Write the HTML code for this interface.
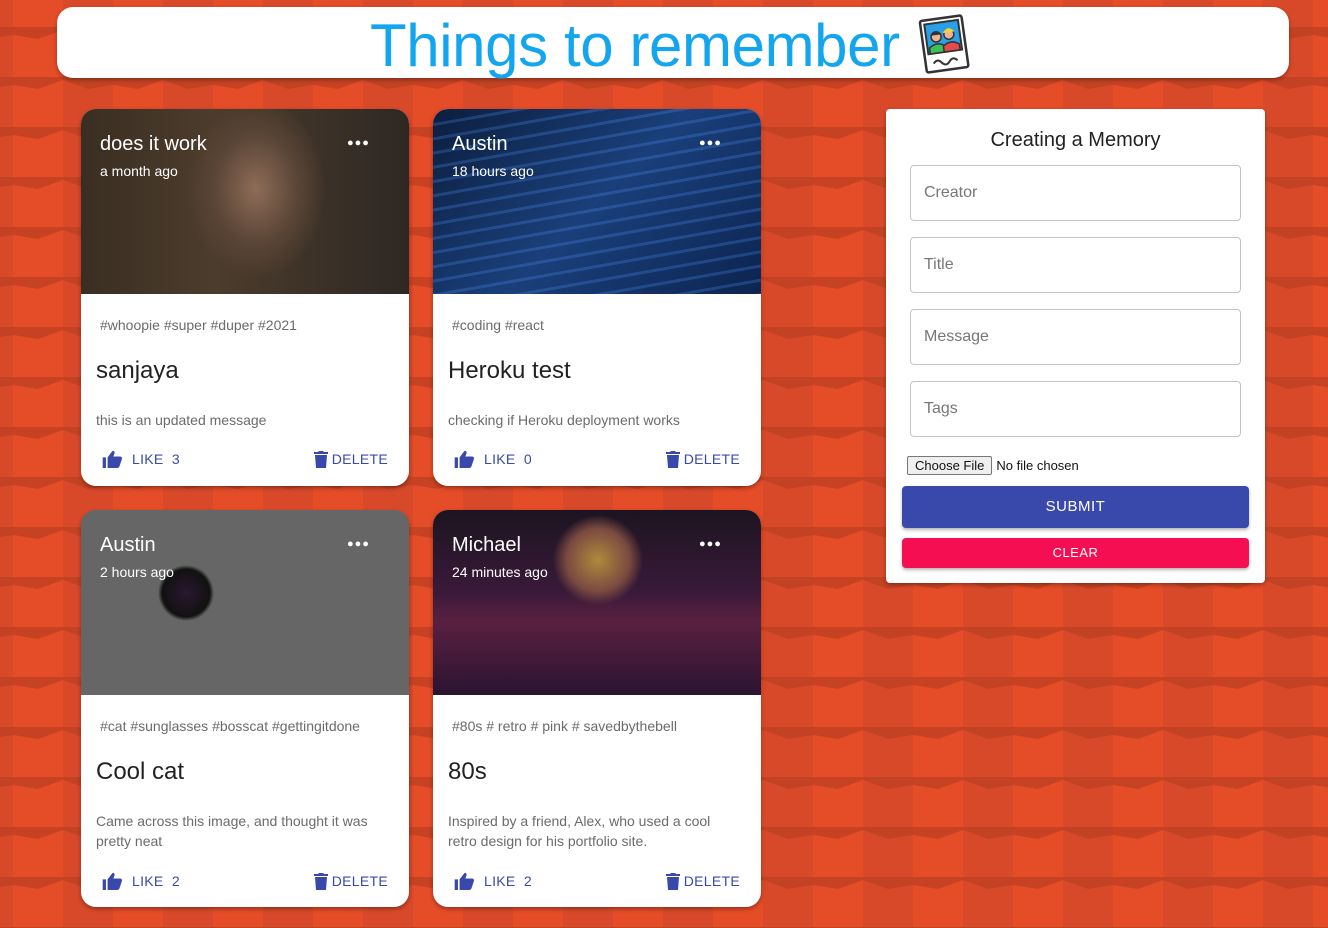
<!DOCTYPE html>
<html><head><meta charset="utf-8"><style>
*{box-sizing:border-box;margin:0;padding:0}
body{width:1328px;height:928px;overflow:hidden;position:relative;font-family:"Liberation Sans",Arial,sans-serif;background:#e64d29}
#bg{position:absolute;left:0;top:0}
.header{position:absolute;left:57px;top:7px;width:1232px;height:71px;background:#fff;border-radius:16px;box-shadow:0 2px 4px rgba(0,0,0,.3)}
.header h1{position:absolute;left:313px;top:4px;font-weight:400;font-size:60px;color:#13a6ee;letter-spacing:-.4px;white-space:nowrap}
.card{position:absolute;width:328px;background:#fff;border-radius:15px;overflow:hidden;box-shadow:0 2px 4px rgba(0,0,0,.35)}
.img{position:absolute;left:0;top:0;width:328px;height:185px}
.name{position:absolute;left:19px;top:24px;color:#fff;font-size:20px}
.time{position:absolute;left:19px;top:54px;color:#fff;font-size:14px}
.dots{position:absolute;left:266px;top:28px;color:#fff;font-size:11px;letter-spacing:1px;font-weight:bold}
.tags{position:absolute;left:19px;top:208px;color:#6b6b6b;font-size:14px}
.title{position:absolute;left:15px;top:248px;color:#222;font-size:24px}
.msg{position:absolute;left:15px;color:#6b6b6b;font-size:14px;line-height:20px;width:285px}
.act{position:absolute;left:0;width:328px;height:24px;color:#3949ab;font-size:14px;letter-spacing:.3px}
.like{position:absolute;left:21px;top:0;display:flex;align-items:center;gap:9px}
.del{position:absolute;right:21px;top:0;display:flex;align-items:center;gap:4px}
.form{position:absolute;left:886px;top:109px;width:379px;height:474px;background:#fff;border-radius:4px;box-shadow:0 2px 4px rgba(0,0,0,.3)}
.form h2{position:absolute;left:0;width:379px;top:20px;text-align:center;font-weight:400;font-size:20px;color:#222}
.in{position:absolute;left:24px;width:331px;height:56px;border:1px solid #c4c4c4;border-radius:4px;padding:18px 13px;font-size:16px;color:#777}
.btn{position:absolute;left:16px;width:347px;color:#fff;text-align:center;border-radius:4px;box-shadow:0 2px 3px rgba(0,0,0,.3);letter-spacing:.5px}
</style></head><body>
<svg id="bg" width="1328" height="928">
<defs>
<pattern id="p" x="13" y="27" width="100" height="50" patternUnits="userSpaceOnUse">
<rect width="50" height="50" fill="#e54c28"/>
<rect x="50" width="50" height="50" fill="#d8492a"/>
<polygon points="0,0 50,0 50,3 25,12 0,8" fill="#9a3318" opacity=".4"/>
<polygon points="50,0 100,0 100,8 75,12 50,3" fill="#9a3318" opacity=".35"/>
</pattern>
</defs>
<rect width="1328" height="928" fill="url(#p)"/>
</svg>

<div class="header"><h1>Things to remember</h1>
<svg style="position:absolute;left:858px;top:5px" width="58" height="62" viewBox="0 0 58 62">
<g transform="rotate(-8 29 31)"><rect x="8" y="6" width="42" height="52" rx="2" fill="#fff" stroke="#333" stroke-width="2.5"/>
<rect x="12" y="10" width="34" height="30" fill="#2aa0e8" stroke="#333" stroke-width="2"/>
<circle cx="22" cy="24" r="5" fill="#f2b48c" stroke="#333" stroke-width="1.5"/><path d="M16 22 q6-8 12 0z" fill="#333"/>
<circle cx="35" cy="23" r="5" fill="#f2b48c" stroke="#333" stroke-width="1.5"/><path d="M29 21 q6-8 12 0z" fill="#f6d33c"/>
<path d="M14 40 v-6 q8-6 16 0 v6z" fill="#3cc05a" stroke="#333" stroke-width="1.5"/>
<path d="M28 40 v-6 q8-6 16 0 v6z" fill="#e84a4a" stroke="#333" stroke-width="1.5"/>
<path d="M16 50 q4-5 8 0 t8 0 t8 0" fill="none" stroke="#333" stroke-width="2"/></g></svg>
</div>

<!-- card 1 -->
<div class="card" style="left:81px;top:109px;height:377px">
<div class="img" style="background:radial-gradient(ellipse 70px 90px at 175px 80px,#8e6c58,#5a4536 60%,transparent 100%),linear-gradient(90deg,#3a2e22,#4c3c2c 40%,#2e2824)"></div>
<div class="name">does it work</div><div class="time">a month ago</div><div class="dots">●●●</div>
<div class="tags">#whoopie #super #duper #2021</div>
<div class="title">sanjaya</div>
<div class="msg" style="top:301px">this is an updated message</div>
<div class="act" style="top:341px"><span class="like"><svg width="21" height="18" viewBox="0 0 24 22"><path fill="#3949ab" d="M0 9h4v13H0zM6 9l6-8c2 0 3 1 2.5 3L13 8h8c2 0 3 1.5 2.5 3l-3 9c-.5 1.3-1.5 2-3 2H6z"/></svg>LIKE&nbsp;&nbsp;3</span><span class="del"><svg width="14" height="18" viewBox="0 0 14 18"><path fill="#3949ab" d="M1 5h12l-1 13H2zM0 2h4l1-1h4l1 1h4v2H0z"/></svg>DELETE</span></div>
</div>

<!-- card 2 -->
<div class="card" style="left:433px;top:109px;height:377px">
<div class="img" style="background:repeating-linear-gradient(170deg,rgba(80,150,255,.25) 0 3px,transparent 3px 14px),linear-gradient(135deg,#0c1e3e,#1a3f7a 50%,#0c2450)"></div>
<div class="name">Austin</div><div class="time">18 hours ago</div><div class="dots">●●●</div>
<div class="tags">#coding #react</div>
<div class="title">Heroku test</div>
<div class="msg" style="top:301px">checking if Heroku deployment works</div>
<div class="act" style="top:341px"><span class="like"><svg width="21" height="18" viewBox="0 0 24 22"><path fill="#3949ab" d="M0 9h4v13H0zM6 9l6-8c2 0 3 1 2.5 3L13 8h8c2 0 3 1.5 2.5 3l-3 9c-.5 1.3-1.5 2-3 2H6z"/></svg>LIKE&nbsp;&nbsp;0</span><span class="del"><svg width="14" height="18" viewBox="0 0 14 18"><path fill="#3949ab" d="M1 5h12l-1 13H2zM0 2h4l1-1h4l1 1h4v2H0z"/></svg>DELETE</span></div>
</div>

<!-- card 3 -->
<div class="card" style="left:81px;top:510px;height:397px">
<div class="img" style="background:radial-gradient(circle 28px at 105px 83px,#2a1830,#111 85%,#666 100%),radial-gradient(circle 28px at 230px 83px,#5a1c3c,#111 85%,#666 100%),radial-gradient(ellipse 130px 110px at 165px 110px,#6a6a6a,#3a3a3a 70%,#2a2a2a)"></div>
<div class="name">Austin</div><div class="time">2 hours ago</div><div class="dots">●●●</div>
<div class="tags">#cat #sunglasses #bosscat #gettingitdone</div>
<div class="title">Cool cat</div>
<div class="msg" style="top:301px">Came across this image, and thought it was pretty neat</div>
<div class="act" style="top:362px"><span class="like"><svg width="21" height="18" viewBox="0 0 24 22"><path fill="#3949ab" d="M0 9h4v13H0zM6 9l6-8c2 0 3 1 2.5 3L13 8h8c2 0 3 1.5 2.5 3l-3 9c-.5 1.3-1.5 2-3 2H6z"/></svg>LIKE&nbsp;&nbsp;2</span><span class="del"><svg width="14" height="18" viewBox="0 0 14 18"><path fill="#3949ab" d="M1 5h12l-1 13H2zM0 2h4l1-1h4l1 1h4v2H0z"/></svg>DELETE</span></div>
</div>

<!-- card 4 -->
<div class="card" style="left:433px;top:510px;height:397px">
<div class="img" style="background:radial-gradient(circle 45px at 165px 50px,#b08a3a,#7a4a40 70%,transparent 100%),linear-gradient(180deg,#1c1420 0,#3a1a3a 45%,#5a2040 60%,#2a1430 100%)"></div>
<div class="name">Michael</div><div class="time">24 minutes ago</div><div class="dots">●●●</div>
<div class="tags">#80s # retro # pink # savedbythebell</div>
<div class="title">80s</div>
<div class="msg" style="top:301px">Inspired by a friend, Alex, who used a cool retro design for his portfolio site.</div>
<div class="act" style="top:362px"><span class="like"><svg width="21" height="18" viewBox="0 0 24 22"><path fill="#3949ab" d="M0 9h4v13H0zM6 9l6-8c2 0 3 1 2.5 3L13 8h8c2 0 3 1.5 2.5 3l-3 9c-.5 1.3-1.5 2-3 2H6z"/></svg>LIKE&nbsp;&nbsp;2</span><span class="del"><svg width="14" height="18" viewBox="0 0 14 18"><path fill="#3949ab" d="M1 5h12l-1 13H2zM0 2h4l1-1h4l1 1h4v2H0z"/></svg>DELETE</span></div>
</div>

<div class="form">
<h2>Creating a Memory</h2>
<div class="in" style="top:56px">Creator</div>
<div class="in" style="top:128px">Title</div>
<div class="in" style="top:200px">Message</div>
<div class="in" style="top:272px">Tags</div>
<div style="position:absolute;left:21px;top:347px;font-size:13px;color:#111;display:flex;align-items:center;gap:4px"><span style="border:1px solid #777;background:#efefef;border-radius:2px;padding:1px 7px">Choose File</span>No file chosen</div>
<div class="btn" style="top:377px;height:42px;line-height:42px;background:#3949ab;font-size:15px">SUBMIT</div>
<div class="btn" style="top:429px;height:30px;line-height:30px;background:#f50f52;font-size:13px">CLEAR</div>
</div>
</body></html>
